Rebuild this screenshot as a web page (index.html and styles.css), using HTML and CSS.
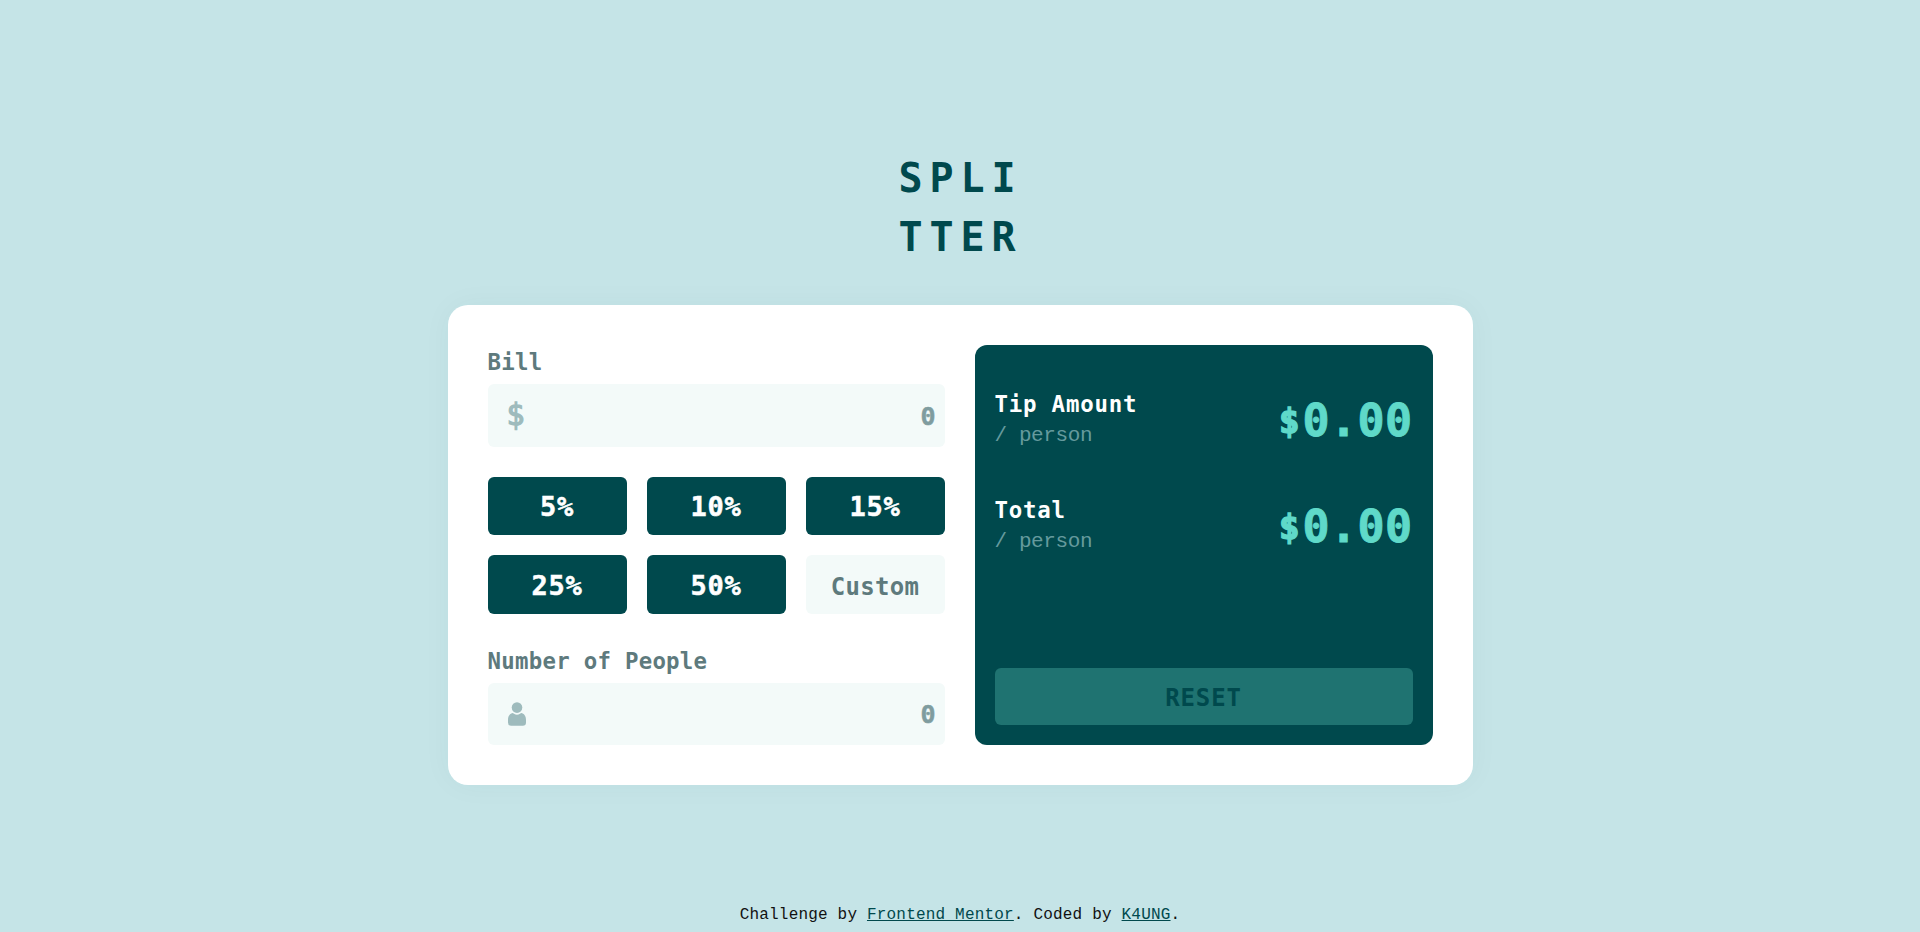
FILE: index.html
```html
<!DOCTYPE html>
<html lang="en">
<head>
<meta charset="utf-8">
<title>Splitter</title>
<link rel="stylesheet" href="styles.css">
</head>
<body>
<main>
  <h1 class="title">SPLI<br>TTER</h1>
  <div class="card">
    <section class="form">
      <div class="label">Bill</div>
      <div class="field field-bill"><span class="dollar">$</span><span class="value">0</span></div>
      <div class="tips">
        <button class="tip">5%</button>
        <button class="tip">10%</button>
        <button class="tip">15%</button>
        <button class="tip">25%</button>
        <button class="tip">50%</button>
        <button class="tip custom">Custom</button>
      </div>
      <div class="label">Number of People</div>
      <div class="field field-people">
        <svg class="person" viewBox="0 0 18 24"><circle cx="9" cy="5.6" r="5.3"/><path d="M3.8 11.2Q5 10.9 6 11.7Q9 13.7 12 11.7Q13 10.9 14.2 11.2C17 12.2 18 15 18 18V20.6Q18 23.8 14.8 23.8H3.2Q0 23.8 0 20.6V18C0 15 1 12.2 3.8 11.2Z"/></svg>
        <span class="value">0</span>
      </div>
    </section>
    <section class="result">
      <div class="row">
        <div><div class="name">Tip Amount</div><div class="per">/ person</div></div>
        <div class="amount"><span class="currency">$</span>0.00</div>
      </div>
      <div class="row">
        <div><div class="name">Total</div><div class="per">/ person</div></div>
        <div class="amount"><span class="currency">$</span>0.00</div>
      </div>
      <button class="reset">RESET</button>
    </section>
  </div>
</main>
<footer class="credits">Challenge by <a href="#">Frontend Mentor</a>. Coded by <a href="#">K4UNG</a>.</footer>
</body>
</html>
```
FILE: styles.css
```css
* { box-sizing: border-box; }
body {
  margin: 0;
  height: 932px;
  overflow: hidden;
  display: flex;
  flex-direction: column;
  justify-content: space-between;
  background: #c5e4e7;
  color: #111;
  font-family: "Liberation Mono", monospace;
}
main { display: flex; flex-direction: column; align-items: center; padding-top: 149px; }
.title, .label, .value, .tip, .name, .amount, .reset, .dollar {
  font-family: "DejaVu Sans Mono", monospace;
}
.title {
  margin: 0 0 38px;
  width: 123px;
  font-size: 40px;
  line-height: 59px;
  letter-spacing: 6.9px;
  white-space: nowrap;
  color: #00494d;
}
.card {
  width: 1025px;
  height: 480px;
  padding: 40px;
  display: grid;
  grid-template-columns: 457px 458px;
  gap: 30px;
  background: #fff;
  border-radius: 20px;
  box-shadow: 0 0 30px rgba(0, 73, 77, 0.04);
}
.form { display: flex; flex-direction: column; }
.label {
  height: 39px;
  line-height: 35px;
  font-size: 22.4px;
  font-weight: 700;
  letter-spacing: 0.26px;
  color: #5e7a7d;
}
.field {
  display: flex;
  align-items: center;
  justify-content: space-between;
  height: 63px;
  padding: 0 9px 0 19px;
  border-radius: 6px;
  background: #f3faf9;
  font-weight: 700;
}
.field-people { height: 62px; padding-left: 20px; }
.dollar { font-size: 30px; line-height: 34px; padding-bottom: 2px; font-weight: 400; -webkit-text-stroke: 1.3px #9ebbbd; color: #9ebbbd; }
.value { font-size: 25px; padding-top: 1px; -webkit-text-stroke: 0.5px #7f9c9f; color: #7f9c9f; }
.person { width: 18px; height: 24px; fill: #9ebbbd; }
.tips {
  display: grid;
  grid-template-columns: repeat(3, 139px);
  grid-template-rows: 58px 59px;
  gap: 20px;
  margin: 30px 0;
}
.tip {
  border: 0;
  padding: 1px 0 0;
  border-radius: 6px;
  background: #00494d;
  color: #fff;
  font-weight: 700;
  font-size: 27px;
  letter-spacing: 0.8px;
  -webkit-text-stroke: 0.5px #fff;
}
.custom {
  padding-top: 4px;
  background: #f3faf9;
  color: #5e7a7d;
  font-size: 24px;
  letter-spacing: 0.3px;
  -webkit-text-stroke: 0;
}
.result {
  display: flex;
  flex-direction: column;
  padding: 40px 20px 20px;
  border-radius: 12px;
  background: #00494d;
}
.row { display: flex; justify-content: space-between; height: 106px; }
.name { font-size: 22.4px; font-weight: 700; line-height: 38px; letter-spacing: 0.8px; color: #fff; }
.per { font-size: 21px; line-height: 26px; letter-spacing: -0.4px; color: #659a9d; }
.amount { font-size: 45px; font-weight: 700; line-height: 72px; letter-spacing: 0.4px; -webkit-text-stroke: 0.9px #5fd9c9; color: #5fd9c9; }
.currency { font-size: 34px; letter-spacing: 3px; vertical-align: 3px; line-height: 1; -webkit-text-stroke-width: 1.5px; }
.reset {
  margin-top: auto;
  height: 57px;
  border: 0;
  padding: 2px 0 0;
  border-radius: 6px;
  background: #1f7371;
  color: #00494d;
  font-weight: 700;
  font-size: 24px;
  letter-spacing: 0.9px;
}
.credits { text-align: center; font-size: 16px; line-height: 18px; letter-spacing: 0.19px; padding-bottom: 8px; }
.credits a { color: #00494d; }
```
